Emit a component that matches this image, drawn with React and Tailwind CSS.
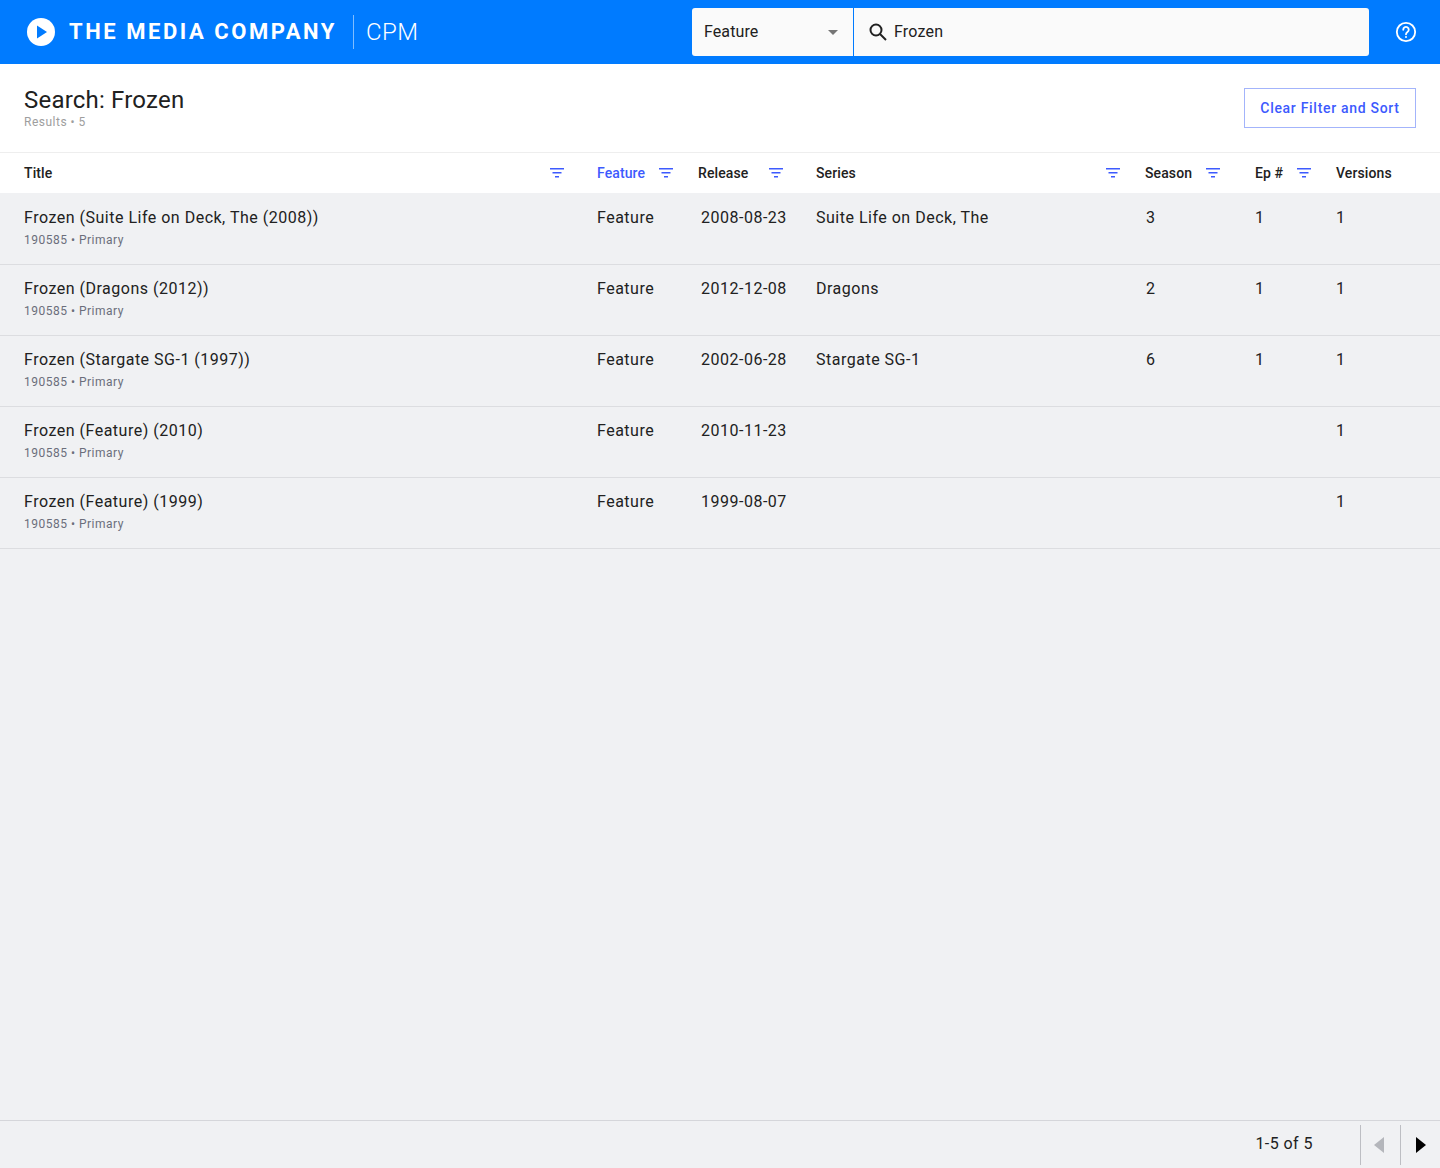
import React from "react";

const GRID = "grid grid-cols-[597px_101px_118px_329px_110px_81px_104px]";

function FilterIcon() {
  return (
    <svg width="14" height="10" viewBox="0 0 14 10" className="shrink-0 text-[#3d5afe]" fill="currentColor">
      <rect x="0" y="0" width="14" height="1.5" />
      <rect x="2.5" y="4" width="9" height="1.5" />
      <rect x="5" y="8" width="4" height="1.5" />
    </svg>
  );
}

function HeadCell({ label, gap, active, first }) {
  return (
    <div className={`flex items-center ${first ? "pl-6" : ""}`}>
      <span className={`text-sm font-medium tracking-[0.1px] ${active ? "text-[#3d5afe]" : "text-[#212121]"}`}>{label}</span>
      {gap ? (
        <span className="flex" style={{ marginLeft: gap }}>
          <FilterIcon />
        </span>
      ) : null}
    </div>
  );
}

const rows = [
  ["Frozen (Suite Life on Deck, The (2008))", "2008-08-23", "Suite Life on Deck, The", "3", "1"],
  ["Frozen (Dragons (2012))", "2012-12-08", "Dragons", "2", "1"],
  ["Frozen (Stargate SG-1 (1997))", "2002-06-28", "Stargate SG-1", "6", "1"],
  ["Frozen (Feature) (2010)", "2010-11-23", "", "", ""],
  ["Frozen (Feature) (1999)", "1999-08-07", "", "", ""],
];

export default function App() {
  return (
    <div className="min-h-screen flex flex-col bg-[#f0f1f3] font-['Roboto',sans-serif] text-[#212121]">
      <header className="h-16 shrink-0 bg-[#007bff] flex items-center justify-between text-white pr-6">
        <div className="flex items-center pl-[27px]">
          <svg width="28" height="28" viewBox="0 0 28 28">
            <circle cx="14" cy="14" r="14" fill="#fff" />
            <path d="M10 7.5 L20 14 L10 20.5 Z" fill="#007bff" />
          </svg>
          <span className="ml-[14px] w-[269px] whitespace-nowrap font-['Roboto',sans-serif] font-bold text-[22px] tracking-[2.55px] leading-none">THE MEDIA COMPANY</span>
          <span className="ml-[15px] h-[34px] w-px bg-white/50" />
          <span className="ml-3 font-['Roboto',sans-serif] font-light text-[24px] tracking-[0.4px] leading-none">CPM</span>
        </div>
        <div className="flex items-center">
          <div className="flex h-12 w-[677px] rounded-[3px] overflow-hidden bg-[#fafafa] text-[#212121]">
            <div className="w-[162px] shrink-0 flex items-center justify-between pl-3 pr-[15px] border-r border-[#007bff]">
              <span className="text-base tracking-[0.1px]">Feature</span>
              <svg width="10" height="5" viewBox="0 0 10 5">
                <path d="M0 0 H10 L5 5 Z" fill="#757575" />
              </svg>
            </div>
            <div className="flex-1 flex items-center pl-[14px]">
              <svg width="20" height="20" viewBox="0 0 20 20" fill="none" stroke="#212121" strokeWidth="2">
                <circle cx="8" cy="8" r="5.5" />
                <path d="M12 12 L18 18" />
              </svg>
              <span className="ml-[6px] text-base tracking-[0.2px]">Frozen</span>
            </div>
          </div>
          <div className="ml-[26px] -mr-[1px] flex">
            <svg width="22" height="22" viewBox="0 0 24 24" fill="none" stroke="#fff" strokeWidth="2">
              <circle cx="12" cy="12" r="10" />
              <path d="M9 9.5a3 3 0 1 1 4.6 2.5c-1 .7-1.6 1.2-1.6 2.5" strokeLinecap="round" />
              <circle cx="12" cy="17.5" r="1.1" fill="#fff" stroke="none" />
            </svg>
          </div>
        </div>
      </header>

      <section className="h-[89px] shrink-0 bg-white border-b border-[#eeeeee] flex items-center justify-between pl-6 pr-6">
        <div>
          <h1 className="text-2xl font-normal leading-7 tracking-[0.2px] text-[#212121]">Search: Frozen</h1>
          <p className="text-xs leading-4 tracking-[0.5px] text-[#9e9e9e]">Results • 5</p>
        </div>
        <button className="h-10 w-[172px] border border-[#a3b4fb] text-sm font-medium tracking-[0.7px] text-[#3d5afe]">Clear Filter and Sort</button>
      </section>

      <div className={`${GRID} h-10 shrink-0 bg-white`}>
        <HeadCell label="Title" gap={498} first />
        <HeadCell label="Feature" gap={14} active />
        <HeadCell label="Release" gap={21} />
        <HeadCell label="Series" gap={250} />
        <HeadCell label="Season" gap={14} />
        <HeadCell label="Ep #" gap={14} />
        <HeadCell label="Versions" />
      </div>

      <main className="flex-1 pt-px">
        {rows.map((r) => (
          <div key={r[0]} className={`${GRID} h-[71px] border-b border-[#dcdde0] text-base leading-6 tracking-[0.5px] text-[#212121]`}>
            <div className="pl-6 pt-[12px]">
              <div>{r[0]}</div>
              <div className="text-xs leading-4 mt-[2px] tracking-[0.5px] text-[#6b6e7b]">190585 • Primary</div>
            </div>
            <div className="pt-[12px]">Feature</div>
            <div className="pt-[12px] pl-[3px]">{r[1]}</div>
            <div className="pt-[12px]">{r[2]}</div>
            <div className="pt-[12px] pl-px">{r[3]}</div>
            <div className="pt-[12px]">{r[4]}</div>
            <div className="pt-[12px]">1</div>
          </div>
        ))}
      </main>

      <footer className="h-12 shrink-0 border-t border-[#d5d6da] flex items-center justify-end">
        <span className="text-base tracking-[0.45px] text-[#212121] -mt-[2px] pr-[2px]">1-5 of 5</span>
        <div className="ml-[45px] w-10 h-10 border-l border-[#bdbec3] flex items-center justify-start pl-[13px]">
          <svg width="10" height="16" viewBox="0 0 10 16">
            <path d="M10 0 V16 L0 8 Z" fill="#b4b6bb" />
          </svg>
        </div>
        <div className="w-10 h-10 border-l border-[#bdbec3] flex items-center justify-start pl-[15px]">
          <svg width="10" height="16" viewBox="0 0 10 16">
            <path d="M0 0 V16 L10 8 Z" fill="#000" />
          </svg>
        </div>
      </footer>
    </div>
  );
}
